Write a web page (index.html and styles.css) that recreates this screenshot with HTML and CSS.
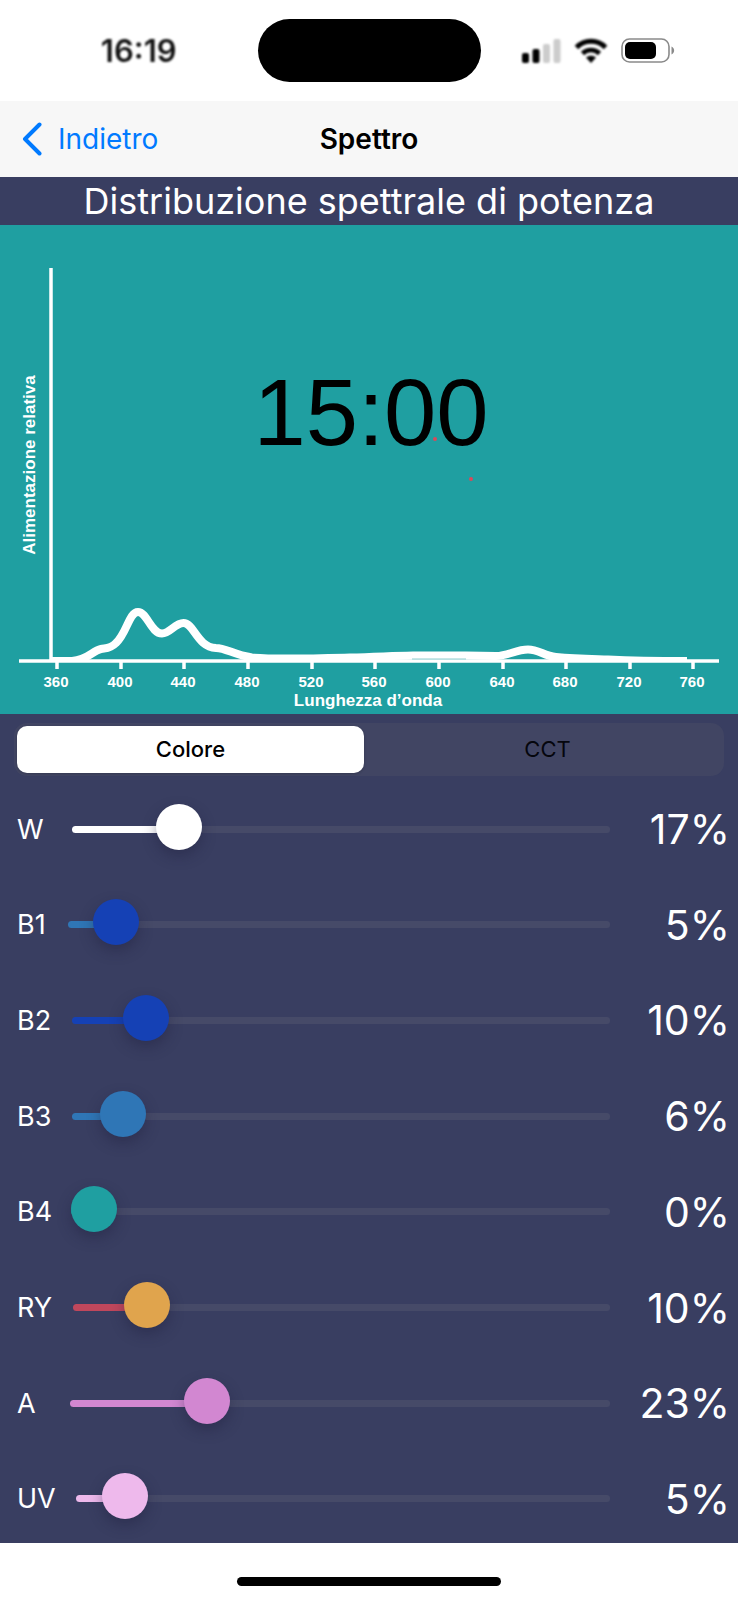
FILE: index.html
```html
<!DOCTYPE html>
<html lang="it">
<head>
    <meta charset="UTF-8">
    <meta name="viewport" content="width=device-width, initial-scale=1.0">
    <title>Spettro</title>
    <link rel="stylesheet" href="styles.css">
</head>
<body>
    <div class="status-bar">
        <div class="status-time">16:19</div>
        <div class="island"></div>
        <div class="status-icons">
            <svg class="soft" width="39" height="26" viewBox="0 0 39 26">
                <rect x="0" y="15" width="7" height="10" rx="2" fill="#000"/>
                <rect x="10.500" y="11" width="7" height="14" rx="2" fill="#000"/>
                <rect x="21" y="6" width="7" height="19" rx="2" fill="#ccc"/>
                <rect x="31.500" y="1" width="7" height="24" rx="2" fill="#ccc"/>
            </svg>
            <svg class="soft" width="34" height="26" viewBox="0 0 34 26">
                <path d="M2.5 9.5 C10.5 1.3 23.5 1.3 31.5 9.5" fill="none" stroke="#000" stroke-width="5"/>
                <path d="M8.5 15.5 C13.3 10.8 20.7 10.8 25.5 15.5" fill="none" stroke="#000" stroke-width="4.6"/>
                <path d="M12 19.5 C14.8 17 19.2 17 22 19.5 L17 25 Z" fill="#000"/>
            </svg>
            <svg width="54" height="26" viewBox="0 0 54 26">
                <rect x="1" y="1" width="47" height="23" rx="7.5" fill="none" stroke="#8a8a8a" stroke-width="1.6"/>
                <rect x="4" y="4" width="31" height="17" rx="5" fill="#000"/>
                <path d="M50.5 8.5 C54 10 54 15 50.5 16.5 Z" fill="#8a8a8a"/>
            </svg>
        </div>
    </div>

    <header class="nav-bar">
        <a class="back" href="#">
            <svg width="20" height="34" viewBox="0 0 20 34">
                <path d="M17.5 2.5 L3 17 L17.5 31.5" fill="none" stroke="currentColor" stroke-width="4" stroke-linecap="round" stroke-linejoin="round"/>
            </svg>
            Indietro
        </a>
        <h1>Spettro</h1>
    </header>

    <h2 class="chart-title">Distribuzione spettrale di potenza</h2>

    <svg class="chart" viewBox="0 0 738 489">
        <clipPath id="plot"><rect x="51" y="43" width="668" height="394"/></clipPath>

        <text class="clock" x="371" y="220">15:00</text>
        <circle cx="435" cy="214" r="2" fill="#d94a5a"/>
        <circle cx="471" cy="254" r="2" fill="#d94a5a"/>

        <text class="axis-title" transform="translate(35 240) rotate(-90)">Alimentazione relativa</text>
        <path class="axis" d="M51 43 V436 M19 436 H719"/>
        <path class="axis" d="M57 436 V444 M121 436 V444 M184 436 V444 M248 436 V444 M312 436 V444 M375 436 V444 M439 436 V444 M503 436 V444 M566 436 V444 M630 436 V444 M693 436 V444"/>
        <path class="curve" clip-path="url(#plot)" d="M52 436 L72 436 C88 435 92 426 101 424 C106 423 110 424 116 418 C127 408 129 387 138 387 C147 387 151 408.500 162 408.500 C170 408.500 175 398 183.500 398 C194 398 197 422 216 423 C226 423 234 430 252 432.500 C275 434.500 310 433.500 350 432.500 C375 432 390 431 413 430.500 H466 L496 431 C508 431 516 424.500 528 424.500 C539 424.500 544 431 556 432 C575 434 590 434 608 434.500 C640 436 660 436 687 436"/>
        <path d="M412 434 H466" stroke="#8fcfcf" fill="none"/>

        <g class="ticks">
            <text x="56" y="462">360</text>
            <text x="120" y="462">400</text>
            <text x="183" y="462">440</text>
            <text x="247" y="462">480</text>
            <text x="311" y="462">520</text>
            <text x="374" y="462">560</text>
            <text x="438" y="462">600</text>
            <text x="502" y="462">640</text>
            <text x="565" y="462">680</text>
            <text x="629" y="462">720</text>
            <text x="692" y="462">760</text>
        </g>
        <text class="axis-title" x="368" y="481">Lunghezza d’onda</text>
    </svg>

    <main class="panel">
        <div class="tabs">
            <input type="radio" name="mode" id="modeColor" checked>
            <label for="modeColor">Colore</label>
            <input type="radio" name="mode" id="modeCct">
            <label for="modeCct">CCT</label>
        </div>

        <div class="channels">
            <div class="channel w">
                <label for="w">W</label>
                <input type="range" id="w" min="0" max="100" step="any" value="17" style="--value: 17">
                <output for="w">17%</output>
            </div>
            <div class="channel b1">
                <label for="b1">B1</label>
                <input type="range" id="b1" min="0" max="100" step="any" value="5" style="--value: 5">
                <output for="b1">5%</output>
            </div>
            <div class="channel b2">
                <label for="b2">B2</label>
                <input type="range" id="b2" min="0" max="100" step="any" value="10.4" style="--value: 10.4">
                <output for="b2">10%</output>
            </div>
            <div class="channel b3">
                <label for="b3">B3</label>
                <input type="range" id="b3" min="0" max="100" step="any" value="5.6" style="--value: 5.6">
                <output for="b3">6%</output>
            </div>
            <div class="channel b4">
                <label for="b4">B4</label>
                <input type="range" id="b4" min="0" max="100" step="any" value="0" style="--value: 0">
                <output for="b4">0%</output>
            </div>
            <div class="channel ry">
                <label for="ry">RY</label>
                <input type="range" id="ry" min="0" max="100" step="any" value="10.4" style="--value: 10.4">
                <output for="ry">10%</output>
            </div>
            <div class="channel a">
                <label for="a">A</label>
                <input type="range" id="a" min="0" max="100" step="any" value="23" style="--value: 23">
                <output for="a">23%</output>
            </div>
            <div class="channel uv">
                <label for="uv">UV</label>
                <input type="range" id="uv" min="0" max="100" step="any" value="5.3" style="--value: 5.3">
                <output for="uv">5%</output>
            </div>
        </div>
    </main>

    <footer class="home-bar"><div class="home-indicator"></div></footer>

    <script>
        document.querySelectorAll('.channel input').forEach(input => {
            input.addEventListener('input', () => {
                input.style.setProperty('--value', input.value);
                input.nextElementSibling.value = Math.round(input.value) + '%';
            });
        });
    </script>
</body>
</html>
```
FILE: styles.css
```css
* {
    box-sizing: border-box;
}
body {
    margin: 0;
    min-height: 100vh;
    display: flex;
    flex-direction: column;
    background-color: #fff;
    font-family: Inter, "Liberation Sans", sans-serif;
}

/* Status bar */
.status-bar {
    display: grid;
    grid-template-columns: 1fr 223px 1fr;
    align-items: center;
    height: 101px;
}
.status-time {
    padding-left: 20px;
    text-align: center;
    font-size: 31px;
    font-weight: 600;
    color: #111;
    filter: blur(1px);
}
.island {
    height: 63px;
    border-radius: 32px;
    background-color: #000;
}
.status-icons {
    display: flex;
    justify-content: center;
    gap: 13px;
    padding-right: 22px;
}
.soft {
    filter: blur(1px);
}

/* Navigation */
.nav-bar {
    display: grid;
    grid-template-columns: 1fr auto 1fr;
    align-items: center;
    height: 76px;
    padding: 0 22px;
    background-color: #f7f7f7;
}
.back {
    display: flex;
    align-items: center;
    gap: 16px;
    font-size: 28px;
    color: #007aff;
    text-decoration: none;
}
h1 {
    margin: 0;
    font-size: 28px;
    font-weight: 600;
    color: #000;
}
.chart-title {
    margin: 0;
    background-color: #393e61;
    color: #fff;
    font-size: 36px;
    font-weight: 400;
    line-height: 48px;
    text-align: center;
    white-space: nowrap;
}

/* Chart */
.chart {
    display: block;
    width: 100%;
    background-color: #1f9fa1;
    font-family: "Liberation Sans", Arial, sans-serif;
}
.chart text {
    text-anchor: middle;
    fill: #fff;
    font-weight: bold;
}
.chart .clock {
    fill: #000;
    font-size: 94px;
    font-weight: normal;
}
.chart .axis-title {
    font-size: 17px;
}
.ticks {
    font-size: 15px;
}
.axis {
    fill: none;
    stroke: #fff;
    stroke-width: 3.5;
}
.curve {
    fill: none;
    stroke: #fff;
    stroke-width: 8;
}

/* Controls */
.panel {
    flex: 1;
    display: flex;
    flex-direction: column;
    background-color: #393e61;
}
.tabs {
    display: flex;
    gap: 10px;
    height: 53px;
    margin: 9px 14px 0;
    padding: 3px;
    border-radius: 13px;
    background-color: #414563;
}
.tabs input {
    position: absolute;
    opacity: 0;
}
.tabs label {
    flex: 1;
    border-radius: 10px;
    color: #05060d;
    font-size: 22px;
    line-height: 47px;
    text-align: center;
}
.tabs input:checked + label {
    background-color: #fff;
    color: #000;
    font-weight: 500;
    box-shadow: 0 1px 3px rgba(0, 0, 0, 0.2);
}
.channels {
    flex: 1;
    display: flex;
    flex-direction: column;
    justify-content: space-between;
    padding: 28px 8px 23px 17px;
}
.channel {
    --fill: #fff;
    --thumb: #fff;
    --label: 55px;
    display: grid;
    grid-template-columns: var(--label) 1fr 120px;
    align-items: center;
    height: 46px;
    color: #fff;
}
.channel label {
    font-size: 27px;
}
.channel output {
    font-size: 41px;
    text-align: right;
}
.channel input {
    appearance: none;
    width: 100%;
    height: 46px;
    margin: 0;
    background: none;
}
.channel input::-webkit-slider-runnable-track {
    height: 7px;
    border-radius: 4px;
    background: linear-gradient(to right, var(--fill) calc(23px + (100% - 46px) * var(--value) / 100), #464a68 0);
}
.channel input::-webkit-slider-thumb {
    appearance: none;
    width: 46px;
    height: 46px;
    margin-top: -22px;
    border-radius: 50%;
    background-color: var(--thumb);
    box-shadow: 0 6px 14px rgba(30, 30, 60, 0.4);
}
.b1 { --fill: #2f76b6; --thumb: #1541b5; --label: 51px; }
.b2 { --fill: #1541b5; --thumb: #1541b5; }
.b3 { --fill: #2f76b6; --thumb: #2f76b6; }
.b4 { --fill: #1f9fa1; --thumb: #1f9fa1; --label: 54px; }
.ry { --fill: #c0475c; --thumb: #e0a44d; --label: 56px; }
.a { --fill: #d287d1; --thumb: #d287d1; --label: 53px; }
.uv { --fill: #eeb9ec; --thumb: #eeb9ec; --label: 59px; }

.home-bar {
    display: flex;
    justify-content: center;
    height: 57px;
    padding-top: 34px;
}
.home-indicator {
    width: 264px;
    height: 9px;
    border-radius: 5px;
    background-color: #000;
}
```
